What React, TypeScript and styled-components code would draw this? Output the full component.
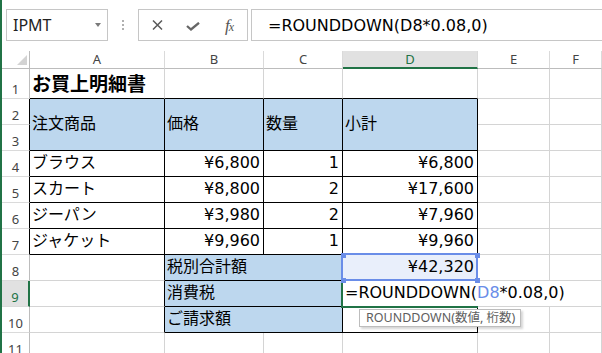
import React from 'react';
import styled, { createGlobalStyle, css } from 'styled-components';

const GREEN = '#217346';
const GRID = '#d4d4d4';
const INK = '#000';
const HEAD_LINE = '#bcbcbc';
const HEAD_SEP = '#dadada';
const FILL = '#bdd7ee';
const SEL = '#6a8de8';

const GlobalStyle = createGlobalStyle`
  html, body { margin: 0; padding: 0; background: #fff; overflow: hidden; }
  body { font-family: "DejaVu Sans", "Noto Sans CJK JP", sans-serif; }
`;

const Window = styled.div`
  width: 602px;
  height: 353px;
  box-sizing: border-box;
  border-left: 2px solid ${GREEN};
  overflow: hidden;
  background: #fff;
`;

const FormulaBar = styled.div`
  display: flex;
  align-items: flex-start;
  height: 51px;
  box-sizing: border-box;
  padding: 9px 0 0 4px;
`;

const Box = styled.div`
  height: 32px;
  box-sizing: border-box;
  border: 1px solid #c6c6c6;
  display: flex;
  align-items: center;
  background: #fff;
`;

const NameBox = styled(Box)`
  width: 102px;
  padding: 0 6px;
  justify-content: space-between;
  font: 16px "Noto Sans", sans-serif;
  color: #222;
`;

const DropArrow = styled.span`
  width: 0;
  height: 0;
  border-left: 3.5px solid transparent;
  border-right: 3.5px solid transparent;
  border-top: 4px solid #7a7a7a;
`;

const Grip = styled.div`
  width: 30px;
  height: 32px;
  display: flex;
  flex-direction: column;
  align-items: center;
  justify-content: center;
  gap: 2px;
`;

const Dot = styled.span`
  width: 2px;
  height: 2px;
  background: #b0b0b0;
`;

const ButtonGroup = styled(Box)`
  width: 110px;
`;

const ToolButton = styled.div`
  width: 36px;
  height: 100%;
  display: flex;
  align-items: center;
  justify-content: center;
  color: #5a5a5a;
`;

const Fx = styled.span`
  font: italic 17px/1 "Liberation Serif", serif;
  color: #555;
  letter-spacing: -1px;
  & > small {
    font-size: 12px;
  }
`;

const FormulaInput = styled(Box)`
  flex: 1;
  margin-left: 3px;
  border-right: none;
  padding-left: 16px;
  font: 16px "DejaVu Sans", sans-serif;
  color: #000;
  white-space: nowrap;
`;

const Sheet = styled.div`
  display: grid;
  grid-template-columns: 28px 135px 99px 79px 135px 72px 1fr;
  grid-template-rows: 18px 30px repeat(10, 26px);
`;

const Corner = styled.div`
  box-sizing: border-box;
  border-right: 1px solid ${HEAD_LINE};
  border-bottom: 1px solid ${HEAD_LINE};
  display: flex;
  align-items: flex-end;
  justify-content: flex-end;
  padding: 0 2px 3px 0;
`;

const ColHead = styled.div<{ $active?: boolean }>`
  box-sizing: border-box;
  border-right: 1px solid ${HEAD_SEP};
  border-bottom: ${(p) => (p.$active ? `2px solid ${GREEN}` : `1px solid ${HEAD_LINE}`)};
  background: ${(p) => (p.$active ? '#e1e1e1' : '#fff')};
  color: ${(p) => (p.$active ? GREEN : '#444')};
  display: flex;
  align-items: flex-end;
  justify-content: center;
  font: 13px/1 "Noto Sans", sans-serif;
  padding-bottom: ${(p) => (p.$active ? '1px' : '2px')};
`;

const RowHead = styled.div<{ $active?: boolean; $edge?: string }>`
  box-sizing: border-box;
  border-bottom: 1px solid ${HEAD_SEP};
  border-right: ${(p) => (p.$active ? `2px solid ${GREEN}` : `1px solid ${p.$edge ?? HEAD_LINE}`)};
  background: ${(p) => (p.$active ? '#e1e1e1' : '#fff')};
  color: ${(p) => (p.$active ? GREEN : '#444')};
  display: flex;
  align-items: flex-end;
  justify-content: center;
  font: 13px/1 "Noto Sans", sans-serif;
  padding-bottom: 2px;
`;

type CellProps = {
  $r?: string;
  $b?: string;
  $fill?: string;
  $align?: 'left' | 'right';
  $cols?: number;
  $rows?: number;
  $title?: boolean;
  $layer?: number;
};

const Cell = styled.div<CellProps>`
  box-sizing: border-box;
  border-right: 1px solid ${(p) => p.$r ?? GRID};
  border-bottom: 1px solid ${(p) => p.$b ?? GRID};
  background: ${(p) => p.$fill ?? '#fff'};
  display: flex;
  align-items: center;
  justify-content: ${(p) => (p.$align === 'right' ? 'flex-end' : 'flex-start')};
  padding: 0 3px 2px 2px;
  font-size: 16px;
  line-height: 20px;
  color: ${INK};
  white-space: nowrap;
  min-width: 0;
  ${(p) => p.$cols && css`grid-column: span ${p.$cols};`}
  ${(p) => p.$rows && css`grid-row: span ${p.$rows};`}
  ${(p) =>
    p.$title &&
    css`
      font: 700 19px/24px "Noto Sans CJK JP", sans-serif;
    `}
  ${(p) =>
    p.$layer &&
    css`
      position: relative;
      z-index: ${p.$layer};
    `}
`;

const Selection = styled.div`
  position: absolute;
  left: -2px;
  top: -2px;
  right: -1px;
  bottom: -1px;
  border: 2px solid ${SEL};
  pointer-events: none;
`;

const Handle = styled.span<{ $x: 'l' | 'r'; $y: 't' | 'b' }>`
  position: absolute;
  width: 5px;
  height: 5px;
  background: ${SEL};
  ${(p) => (p.$x === 'l' ? 'left: -2px;' : 'right: -3px;')}
  ${(p) => (p.$y === 't' ? 'top: -2px;' : 'bottom: -3px;')}
`;

const ActiveFrame = styled.div`
  position: absolute;
  left: -2px;
  top: -2px;
  right: -1px;
  bottom: -2px;
  border-left: 2px solid ${GREEN};
  border-bottom: 2px solid ${GREEN};
  pointer-events: none;
`;

const Editor = styled.div`
  position: absolute;
  left: 0;
  top: 0;
  bottom: 0;
  padding: 0 0 2px 2px;
  display: flex;
  align-items: center;
  background: #fff;
  font: 16px/20px "DejaVu Sans", sans-serif;
  white-space: nowrap;
  color: #000;
`;

const Ref = styled.span`
  color: ${SEL};
`;

const Tip = styled.div`
  position: absolute;
  left: 16px;
  top: 28px;
  width: 162px;
  height: 18px;
  box-sizing: border-box;
  border: 1px solid #bdbdbd;
  background: #fff;
  box-shadow: 2px 2px 2px rgba(0, 0, 0, 0.16);
  padding-left: 6px;
  display: flex;
  align-items: center;
  font: 12.5px/1 "Noto Sans", "Noto Sans CJK JP", sans-serif;
  color: #5e5e5e;
  white-space: nowrap;
`;

const items = [
  { name: 'ブラウス', price: '¥6,800', qty: '1', sub: '¥6,800' },
  { name: 'スカート', price: '¥8,800', qty: '2', sub: '¥17,600' },
  { name: 'ジーパン', price: '¥3,980', qty: '2', sub: '¥7,960' },
  { name: 'ジャケット', price: '¥9,960', qty: '1', sub: '¥9,960' },
];

const Tail = () => (
  <>
    <Cell />
    <Cell />
  </>
);

export default function App() {
  return (
    <>
      <GlobalStyle />
      <Window>
        <FormulaBar>
          <NameBox>
            <span>IPMT</span>
            <DropArrow />
          </NameBox>
          <Grip>
            <Dot />
            <Dot />
            <Dot />
          </Grip>
          <ButtonGroup>
            <ToolButton>
              <svg width="11" height="10" viewBox="0 0 11 10">
                <path d="M1 0.5 L10 9.5 M10 0.5 L1 9.5" stroke="#5a5a5a" strokeWidth="1.5" fill="none" />
              </svg>
            </ToolButton>
            <ToolButton>
              <svg width="14" height="9" viewBox="0 0 14 9" style={{ marginTop: 2 }}>
                <path d="M1 4 L5 7.5 L13 0.8" stroke="#666" strokeWidth="2.3" fill="none" />
              </svg>
            </ToolButton>
            <ToolButton>
              <Fx>
                f<small>x</small>
              </Fx>
            </ToolButton>
          </ButtonGroup>
          <FormulaInput>=ROUNDDOWN(D8*0.08,0)</FormulaInput>
        </FormulaBar>

        <Sheet>
          <Corner>
            <svg width="10" height="10" viewBox="0 0 10 10">
              <polygon points="10,0 10,10 0,10" fill="#d3d3d3" />
            </svg>
          </Corner>
          <ColHead>A</ColHead>
          <ColHead>B</ColHead>
          <ColHead>C</ColHead>
          <ColHead $active>D</ColHead>
          <ColHead>E</ColHead>
          <ColHead>F</ColHead>

          <RowHead>1</RowHead>
          <Cell $b={INK} $title>
            お買上明細書
          </Cell>
          <Cell $b={INK} />
          <Cell $b={INK} />
          <Cell $b={INK} />
          <Tail />

          <RowHead $edge={INK}>2</RowHead>
          <Cell $rows={2} $r={INK} $b={INK} $fill={FILL}>
            注文商品
          </Cell>
          <Cell $rows={2} $r={INK} $b={INK} $fill={FILL}>
            価格
          </Cell>
          <Cell $rows={2} $r={INK} $b={INK} $fill={FILL}>
            数量
          </Cell>
          <Cell $rows={2} $r={INK} $b={INK} $fill={FILL}>
            小計
          </Cell>
          <Tail />
          <RowHead $edge={INK}>3</RowHead>
          <Tail />

          {items.map((it, i) => (
            <React.Fragment key={it.name}>
              <RowHead $edge={INK}>{i + 4}</RowHead>
              <Cell $r={INK} $b={INK}>
                {it.name}
              </Cell>
              <Cell $r={INK} $b={INK} $align="right">
                {it.price}
              </Cell>
              <Cell $r={INK} $b={INK} $align="right">
                {it.qty}
              </Cell>
              <Cell $r={INK} $b={INK} $align="right">
                {it.sub}
              </Cell>
              <Tail />
            </React.Fragment>
          ))}

          <RowHead>8</RowHead>
          <Cell $r={INK} />
          <Cell $cols={2} $r={INK} $b={INK} $fill={FILL}>
            税別合計額
          </Cell>
          <Cell $r={INK} $b={INK} $fill="#e9effb" $align="right" $layer={4}>
            ¥42,320
            <Selection />
            <Handle $x="l" $y="t" />
            <Handle $x="r" $y="t" />
            <Handle $x="l" $y="b" />
            <Handle $x="r" $y="b" />
          </Cell>
          <Tail />

          <RowHead $active>9</RowHead>
          <Cell $r={INK} />
          <Cell $cols={2} $r={INK} $b={INK} $fill={FILL}>
            消費税
          </Cell>
          <Cell $r={INK} $b={INK} $layer={3}>
            <Editor>
              =ROUNDDOWN(<Ref>D8</Ref>*0.08,0)
            </Editor>
            <ActiveFrame />
            <Tip>ROUNDDOWN(数値, 桁数)</Tip>
          </Cell>
          <Tail />

          <RowHead>10</RowHead>
          <Cell $r={INK} />
          <Cell $cols={2} $r={INK} $b={INK} $fill={FILL}>
            ご請求額
          </Cell>
          <Cell $r={INK} $b={INK} />
          <Tail />

          <RowHead>11</RowHead>
          <Cell />
          <Cell />
          <Cell />
          <Cell />
          <Tail />
        </Sheet>
      </Window>
    </>
  );
}
